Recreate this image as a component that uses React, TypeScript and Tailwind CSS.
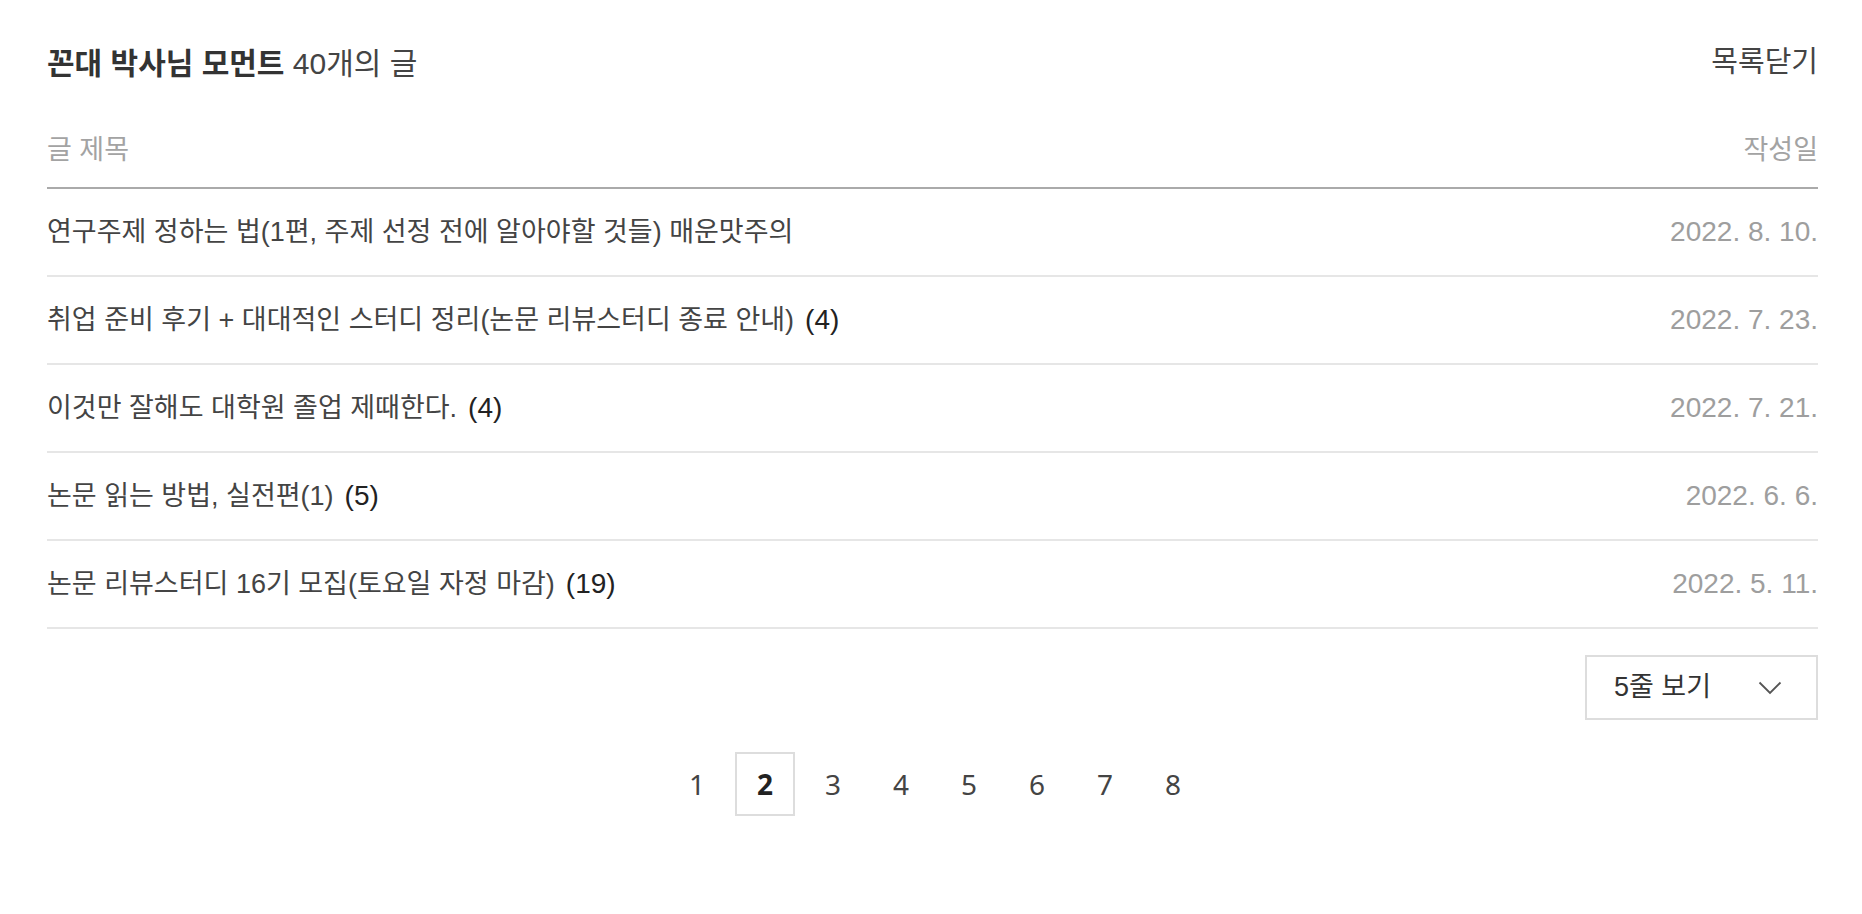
import React from "react";

const KR = { fontFamily: '"Liberation Sans", "Noto Sans CJK KR", sans-serif' };

const rows: { title: string; count?: string; date: string }[] = [
  { title: "연구주제 정하는 법(1편, 주제 선정 전에 알아야할 것들) 매운맛주의", date: "2022. 8. 10." },
  { title: "취업 준비 후기 + 대대적인 스터디 정리(논문 리뷰스터디 종료 안내)", count: "(4)", date: "2022. 7. 23." },
  { title: "이것만 잘해도 대학원 졸업 제때한다.", count: "(4)", date: "2022. 7. 21." },
  { title: "논문 읽는 방법, 실전편(1)", count: "(5)", date: "2022. 6. 6." },
  { title: "논문 리뷰스터디 16기 모집(토요일 자정 마감)", count: "(19)", date: "2022. 5. 11." },
];

export default function App() {
  return (
    <div className="w-[1862px] h-[914px] bg-white pl-[47px] pr-[44px] pt-[40px]" style={KR}>
      <div className="flex items-center justify-between h-[46px]">
        <div className="text-[30px] text-[#444]">
          <span className="font-bold text-[#333]">꼰대 박사님 모먼트</span> 40개의 글
        </div>
        <div className="text-[29px] text-[#444]">목록닫기</div>
      </div>

      <div className="flex items-center justify-between h-[50px] mt-[39px] mb-[12px] text-[27px] text-[#a3a3a3]">
        <span>글 제목</span>
        <span>작성일</span>
      </div>
      <div className="border-b-2 border-[#aaaaaa]" />

      {rows.map((r) => (
        <div key={r.date} className="flex items-center justify-between h-[88px] border-b-2 border-[#e6e6e6]">
          <div className="text-[27px] text-[#444] flex items-center">
            <span>{r.title}</span>
            {r.count && (
              <span className="ml-[11px] text-[28px] text-[#222]" style={{ fontFamily: '"Liberation Sans", sans-serif' }}>
                {r.count}
              </span>
            )}
          </div>
          <div className="text-[28px] text-[#9e9e9e]" style={{ fontFamily: '"Liberation Sans", sans-serif' }}>
            {r.date}
          </div>
        </div>
      ))}

      <div className="flex justify-end mt-[26px]">
        <div className="w-[233px] h-[65px] border-2 border-[#dddddd] flex items-center justify-between pl-[27px] pr-[34px]">
          <span className="text-[27px] text-[#333]">5줄 보기</span>
          <svg width="24" height="14" viewBox="0 0 24 14" fill="none">
            <path d="M1.5 1.5 L12 12 L22.5 1.5" stroke="#555" strokeWidth="1.8" />
          </svg>
        </div>
      </div>

      <div className="flex justify-center gap-[8px] mt-[32px] pl-[5px]" style={{ fontFamily: '"Noto Sans", sans-serif' }}>
        {[1, 2, 3, 4, 5, 6, 7, 8].map((n) => (
          <div
            key={n}
            className={
              n === 2
                ? "w-[60px] h-[64px] flex items-center justify-center border-2 border-[#dddddd] text-[28px] font-bold text-[#222]"
                : "w-[60px] h-[64px] flex items-center justify-center border-2 border-transparent text-[28px] text-[#444]"
            }
          >
            {n}
          </div>
        ))}
      </div>
    </div>
  );
}
